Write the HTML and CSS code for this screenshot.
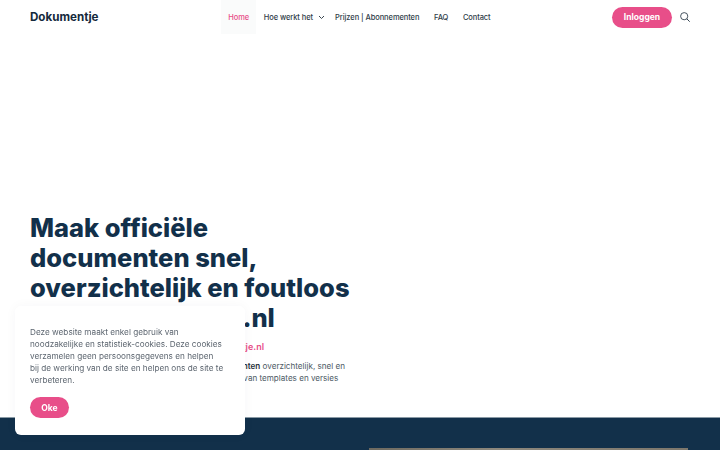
FILE: index.html
```html
<!DOCTYPE html>
<html lang="nl">
<head>
<meta charset="utf-8">
<title>Dokumentje</title>
<link rel="stylesheet" href="styles.css">
</head>
<body>
<header class="header">
  <a class="logo" href="#">Dokumentje</a>
  <nav class="nav">
    <a class="nav-link active" href="#">Home</a>
    <a class="nav-link" href="#">Hoe werkt het
      <svg class="chevron" width="7" height="5" viewBox="0 0 7 5"><path d="M1 1l2.500 2.500L6 1" fill="none" stroke="#3a4650" stroke-width="1"/></svg>
    </a>
    <a class="nav-link" href="#">Prijzen | Abonnementen</a>
    <a class="nav-link" href="#">FAQ</a>
    <a class="nav-link" href="#">Contact</a>
  </nav>
  <div class="actions">
    <a class="btn btn-login" href="#">Inloggen</a>
    <svg class="search" width="10" height="10" viewBox="0 0 10 10"><circle cx="4.200" cy="4.200" r="3.600" fill="none" stroke="#33424f" stroke-width="0.900"/><path d="M6.800 6.800L9.700 9.700" stroke="#33424f" stroke-width="1"/></svg>
  </div>
</header>
<main class="hero">
  <div class="hero-copy">
    <h1 class="title">Maak officiële<br>documenten snel,<br>overzichtelijk en foutloos<br><span class="title-last">met Dokumentje.nl</span></h1>
    <p class="subtitle">www.dokumentje.nl</p>
    <p class="lead">Met Dokumentje.nl maak je eenvoudig officiële <strong>documenten</strong> overzichtelijk, snel en<br>foutloos op en houd altijd overzicht, met handig beheer van templates en versies</p>
  </div>
</main>
<section class="band">
  <div class="photo"></div>
</section>
<aside class="cookie">
  <p class="cookie-text">Deze website maakt enkel gebruik van<br>noodzakelijke en statistiek-cookies. Deze cookies<br>verzamelen geen persoonsgegevens en helpen<br>bij de werking van de site en helpen ons de site te<br>verbeteren.</p>
  <a class="btn btn-ok" href="#">Oke</a>
</aside>
</body>
</html>
```
FILE: styles.css
```css
* { box-sizing: border-box; }
html, body { margin: 0; height: 450px; overflow: hidden; }
body { font-family: Inter, "Liberation Sans", sans-serif; background: #fff; color: #12304a; }
a { text-decoration: none; color: inherit; }
.header { height: 34px; display: flex; align-items: center; padding: 0 30px; }
.logo { font-size: 11.600px; font-weight: 700; color: #14293c; width: 191px; }
.nav { display: flex; align-items: stretch; height: 34px; }
.nav-link { display: flex; align-items: center; gap: 4px; padding: 0 7.300px; font-size: 7.500px; letter-spacing: -0.080px; font-weight: 500; color: #2f3d49; white-space: nowrap; }
.nav-link.active { color: #e84e89; background: #fafbfb; }
.chevron { margin: 0 -4.500px 0 1px; }
.actions { margin-left: auto; display: flex; align-items: center; gap: 8px; }
.btn { display: flex; align-items: center; justify-content: center; border-radius: 11px; background: #e84e89; color: #fff; font-weight: 700; font-size: 8.500px; height: 21px; }
.btn-login { width: 60px; }
.hero { height: 383px; display: flex; flex-direction: column; justify-content: flex-end; padding: 0 30px 33px; }
.hero-copy { width: 330px; }
.title { margin: 0 0 7px; font-size: 25.500px; line-height: 30px; font-weight: 800; color: #12304a; white-space: nowrap; }
.title-last { word-spacing: 5px; }
.subtitle { margin: 0 0 6px; font-size: 9px; line-height: 14px; font-weight: 600; color: #e84e89; text-align: right; width: 234px; }
.lead { margin: 0; font-size: 8.100px; line-height: 12px; color: #4d5a64; white-space: nowrap; }
.lead strong { color: #27323b; font-weight: 600; }
.band { height: 33px; background: #12304a; border-top: 1px solid #8a9aa5; padding: 30px 32px 0 369px; }
.photo { height: 10px; background: linear-gradient(90deg, #6e6a60, #8d887d 40%, #7d776c); }
.cookie { position: fixed; left: 15px; top: 306px; width: 230px; height: 129px; background: #fff; border-radius: 6px; padding: 20px 15px; box-shadow: 0 0 12px rgba(18, 48, 74, 0.04); }
.cookie-text { margin: 0 0 11px; font-size: 8.200px; line-height: 12px; color: #5d6670; }
.btn-ok { width: 39px; }
```
